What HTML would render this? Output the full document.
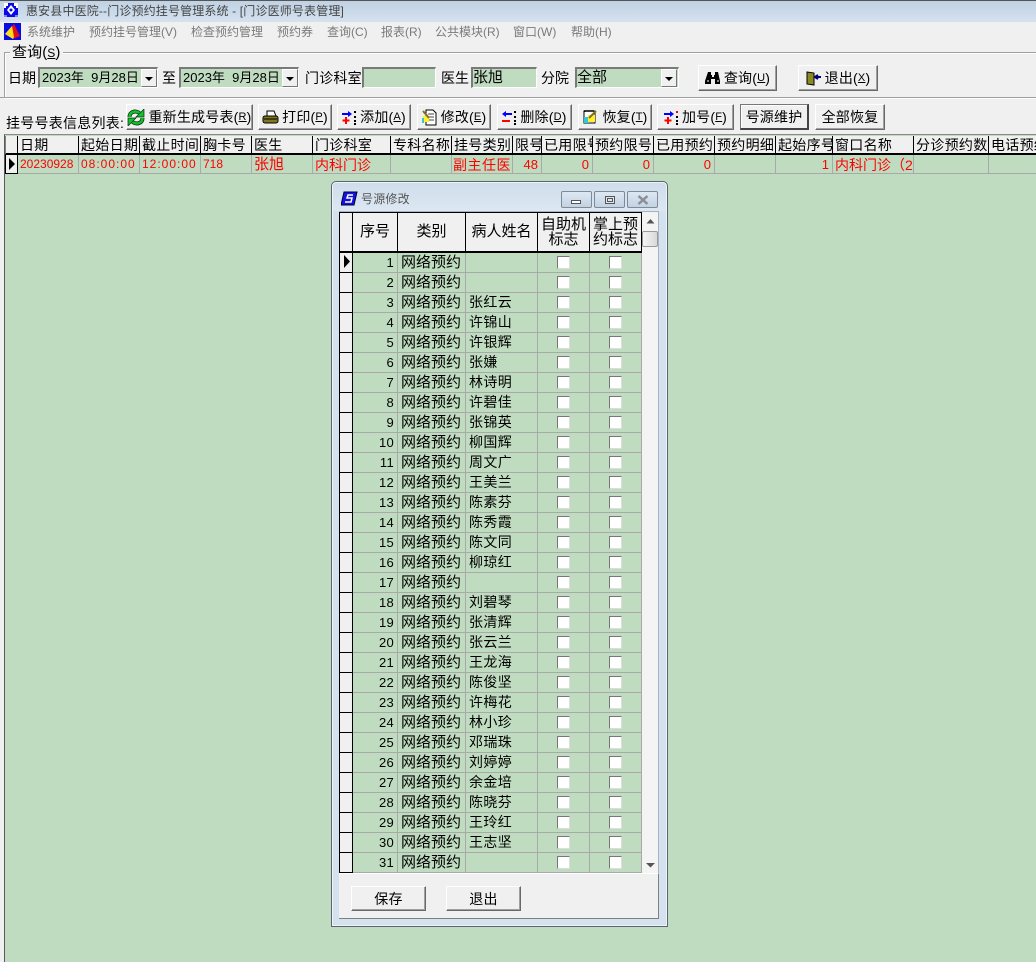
<!DOCTYPE html>
<html lang="zh"><head><meta charset="utf-8"><title>惠安县中医院</title>
<style>
html,body{margin:0;padding:0}
body{width:1036px;height:962px;overflow:hidden;position:relative;background:#f0f0f0;font:14px "Liberation Sans","WenQuanYi Zen Hei","Noto Sans CJK SC",sans-serif;color:#000}
.a,.b,.t,.i{position:absolute;box-sizing:border-box;white-space:nowrap}
.t{line-height:20px;height:20px}
.b{background:#f0f0f0;border-top:1px solid #fff;border-left:1px solid #fff;border-right:1px solid #696969;border-bottom:1px solid #696969;box-shadow:inset -1px -1px 0 #a0a0a0;display:flex;align-items:center;justify-content:center;height:26px;letter-spacing:.2px;font-size:14px}
.b svg{margin-right:3px;flex:none}
.b u{font-size:11px;text-decoration:underline}
.in{position:absolute;box-sizing:border-box;background:#c0dcc0;border-top:2px solid #7a7a7a;border-left:2px solid #7a7a7a;border-right:1px solid #fff;border-bottom:1px solid #fff;height:21px;line-height:17px;white-space:nowrap;overflow:hidden}
.dd{position:absolute;box-sizing:border-box;width:16px;height:18px;background:#f0f0f0;border:1px solid #777;border-top-color:#fff;border-left-color:#fff}
.dd:after{content:"";position:absolute;left:3px;top:7px;border-left:4px solid transparent;border-right:4px solid transparent;border-top:4px solid #000}
.h{position:absolute;top:136px;height:19px;line-height:18px;background:#f0f0f0;border-right:1px solid #000;border-bottom:2px solid #000;box-sizing:border-box;padding-left:2px;overflow:hidden;white-space:nowrap;letter-spacing:.3px}
.c{position:absolute;top:155px;height:19px;line-height:19px;background:#c0dcc0;border-right:1px solid #a9a9a9;border-bottom:1px solid #a9a9a9;box-sizing:border-box;padding:0 2px;overflow:hidden;white-space:nowrap;color:#f00;font-size:13px}
.z{font-size:14px;line-height:20px}
.r{text-align:right;padding-right:3px}
#g{position:absolute;left:339px;top:212px;border-collapse:collapse;table-layout:fixed;width:302px;background:#c0dcc0}
#g td{height:20px;padding:0;box-sizing:border-box;border-right:1px solid #a9a9a9;border-bottom:1px solid #a9a9a9;line-height:19px;overflow:hidden;white-space:nowrap}
#g tr>td:first-child{background:#f0f0f0;border-right:1px solid #000;border-bottom:1px solid #000;border-left:1px solid #000}
#g td:nth-child(2){text-align:right;padding-right:3px;font-size:13px;letter-spacing:.3px}
#g td:nth-child(3){padding-left:3px;font-size:15px}
#g td:nth-child(4){padding-left:3px;font-size:14px;letter-spacing:.4px}
#g td:nth-child(5),#g td:nth-child(6){text-align:center}
#g td i{display:inline-block;box-sizing:border-box;width:13px;height:13px;background:#fff;border:1px solid;border-color:#777 #ddd #ddd #777;vertical-align:-2px}
#g tr.hd td{height:39px;background:#f0f0f0;border-right:1px solid #000;border-bottom:2px solid #000;border-top:1px solid #000;text-align:center;padding:1px 0 0;line-height:15px;white-space:normal;font-size:15px;letter-spacing:0}
#g tr.hd td:first-child{border-left:1px solid #000}
</style></head><body>

<div class="a" style="left:0;top:0;width:1036px;height:22px;background:linear-gradient(#c0d2e4,#d4e1ee);border-top:1px solid #555"></div>
<svg class="a" style="left:4px;top:3px" width="14" height="14"><rect width="14" height="14" fill="#0a0ae6"/><path d="M0 0h4v3H2v2H0zM14 0h-4v3h2v2h2zM7 2l4 5-4 5-4-5z" fill="#fff"/><circle cx="7" cy="7" r="1.500" fill="#0a0ae6"/><path d="M0 13h3M11 13h3" stroke="#fff"/></svg>
<div class="t" style="left:26px;top:1px;color:#444;font-size:12px;letter-spacing:.15px">惠安县中医院--门诊预约挂号管理系统 - [门诊医师号表管理]</div>

<svg class="a" style="left:4px;top:23px" width="17" height="17"><rect width="17" height="17" fill="#0a0ae6"/><path d="M10 1l6 12-7 3-8-5z" fill="#e01010"/><path d="M1 11l7-8 2 11-1 2z" fill="#f5e020"/></svg>
<div class="t" style="left:27px;top:22px;color:#7a7a7a;font-size:12px">系统维护</div>
<div class="t" style="left:89px;top:22px;color:#7a7a7a;font-size:12px">预约挂号管理(V)</div>
<div class="t" style="left:191px;top:22px;color:#7a7a7a;font-size:12px">检查预约管理</div>
<div class="t" style="left:277px;top:22px;color:#7a7a7a;font-size:12px">预约券</div>
<div class="t" style="left:327px;top:22px;color:#7a7a7a;font-size:12px">查询(C)</div>
<div class="t" style="left:381px;top:22px;color:#7a7a7a;font-size:12px">报表(R)</div>
<div class="t" style="left:435px;top:22px;color:#7a7a7a;font-size:12px">公共模块(R)</div>
<div class="t" style="left:513px;top:22px;color:#7a7a7a;font-size:12px">窗口(W)</div>
<div class="t" style="left:571px;top:22px;color:#7a7a7a;font-size:12px">帮助(H)</div>

<!-- group -->
<div class="a" style="left:4px;top:52px;width:1040px;height:46px;border:1px solid #a0a0a0;box-shadow:inset 1px 1px 0 #fff,0 1px 0 #fff"></div>
<div class="t" style="left:10px;top:43px;background:#f0f0f0;padding:0 2px;font-size:15px;letter-spacing:.1px">查询(<u style="font-size:12px">S</u>)</div>

<div class="t" style="left:8px;top:68px;font-size:14px">日期</div>
<div class="in" style="left:38px;top:67px;width:120px;padding-left:2px;font-size:13px">2023年&nbsp; 9月28日<span class="dd" style="left:101px;top:0"></span></div>
<div class="t" style="left:162px;top:68px">至</div>
<div class="in" style="left:179px;top:67px;width:120px;padding-left:2px;font-size:13px">2023年&nbsp; 9月28日<span class="dd" style="left:101px;top:0"></span></div>
<div class="t" style="left:305px;top:68px;letter-spacing:.2px">门诊科室</div>
<div class="in" style="left:362px;top:67px;width:74px"></div>
<div class="t" style="left:441px;top:68px">医生</div>
<div class="in" style="left:471px;top:67px;width:66px;padding-left:0;font-size:15px;line-height:17px">张旭</div>
<div class="t" style="left:541px;top:68px">分院</div>
<div class="in" style="left:575px;top:67px;width:104px;padding-left:0;font-size:15px;line-height:17px">全部<span class="dd" style="left:84px;top:0"></span></div>

<div class="b" style="left:698px;top:65px;width:79px"><svg width="16" height="14" viewBox="0 0 16 14"><path d="M3 1h3v3h1v2h2V4h1V1h3l2 9v3H10V8H6v5H0v-3z" fill="#000"/><path d="M2 10h2M12 10h2" stroke="#fff"/></svg>查询(<u>U</u>)</div>
<div class="b" style="left:798px;top:65px;width:80px"><svg width="16" height="15" viewBox="0 0 16 15"><path d="M1 1l7 1v12l-7-1z" fill="#8a8a20" stroke="#000"/><path d="M10 6h5M12 4l-3 2 3 2" stroke="#00007a" stroke-width="2" fill="none"/></svg>退出(<u>X</u>)</div>

<div class="a" style="left:0;top:97px;width:1036px;height:1px;background:#a0a0a0"></div>

<div class="t" style="left:6px;top:113px;letter-spacing:.25px">挂号号表信息列表:</div>
<div class="b" style="left:126px;top:104px;width:127px"><svg width="18" height="17" viewBox="0 0 18 17"><path d="M2.500 8C2.500 3 8 1 12.500 4" fill="none" stroke="#04300a" stroke-width="4"/><path d="M15.500 9C15.500 14 10 16 5.500 13" fill="none" stroke="#04300a" stroke-width="4"/><path d="M2.500 8C2.500 3 8 1 12.500 4" fill="none" stroke="#12c030" stroke-width="2.500"/><path d="M15.500 9C15.500 14 10 16 5.500 13" fill="none" stroke="#12c030" stroke-width="2.500"/><path d="M17 0v8H9z" fill="#12c030" stroke="#04300a" stroke-width=".7"/><path d="M1 17V9h8z" fill="#12c030" stroke="#04300a" stroke-width=".7"/></svg>重新生成号表(<u>R</u>)</div>
<div class="b" style="left:258px;top:104px;width:74px"><svg width="17" height="15" viewBox="0 0 17 15"><path d="M5 1h7l2 5H5z" fill="#fff" stroke="#000"/><rect x="1" y="6" width="15" height="7" rx="2" fill="#807820" stroke="#000"/><path d="M2 9h13" stroke="#000"/></svg>打印(<u>P</u>)</div>
<div class="b" style="left:337px;top:104px;width:74px"><svg width="15" height="15" viewBox="0 0 15 15"><path d="M0 4h8" stroke="#00f" stroke-width="2"/><path d="M6 1l4 3-4 3z" fill="#00f"/><path d="M4 7v7M0.500 10.500h7" stroke="#f00" stroke-width="2"/><path d="M13 1v2M13 6v2M13 10v2M13 13v2" stroke="#000" stroke-width="2"/></svg>添加(<u>A</u>)</div>
<div class="b" style="left:417px;top:104px;width:74px"><svg width="16" height="17" viewBox="0 0 16 17"><path d="M4 1h7l3 3v12H4z" fill="#fff" stroke="#000"/><path d="M6 5h6M7 8h5M7 11h5" stroke="#444"/><rect x="1" y="7" width="6" height="6" fill="#ffef30"/><path d="M1 2l6 7" stroke="#807020" stroke-width="2"/><path d="M0 9h2v5H0z" fill="#30c8d8"/></svg>修改(<u>E</u>)</div>
<div class="b" style="left:497px;top:104px;width:75px"><svg width="15" height="15" viewBox="0 0 15 15"><path d="M2 4h8" stroke="#00f" stroke-width="2"/><path d="M4 1L0 4l4 3z" fill="#00f"/><path d="M0 11h8" stroke="#f00" stroke-width="2"/><path d="M13 1v2M13 6v2M13 10v2M13 13v2" stroke="#000" stroke-width="2"/></svg>删除(<u>D</u>)</div>
<div class="b" style="left:578px;top:104px;width:74px"><svg width="17" height="16" viewBox="0 0 17 16"><path d="M2 2h11v12H2z" fill="#fff" stroke="#000"/><path d="M3 1v2M5 1v2M7 1v2M9 1v2M11 1v2" stroke="#000"/><rect x="2" y="8" width="5" height="6" fill="#30c8d8"/><rect x="6" y="6" width="7" height="7" fill="#ffef30"/><path d="M7 9l7-7" stroke="#807020" stroke-width="2"/></svg>恢复(<u>T</u>)</div>
<div class="b" style="left:657px;top:104px;width:77px"><svg width="15" height="15" viewBox="0 0 15 15"><path d="M0 4h8" stroke="#00f" stroke-width="2"/><path d="M6 1l4 3-4 3z" fill="#00f"/><path d="M4 7v7M0.500 10.500h7" stroke="#f00" stroke-width="2"/><path d="M13 1v2" stroke="#f00" stroke-width="2"/><path d="M13 6v2M13 10v2M13 13v2" stroke="#000" stroke-width="2"/></svg>加号(<u>F</u>)</div>
<div class="b" style="left:740px;top:104px;width:69px;border:1px solid #777;border-right:2px solid #444;border-bottom:2px solid #444;box-shadow:inset 1px 1px 0 #fff">号源维护</div>
<div class="b" style="left:815px;top:104px;width:70px">全部恢复</div>

<!-- main grid -->
<div class="a" style="left:4px;top:134px;width:1032px;height:828px;background:#c0dcc0;border-left:1px solid #5a5a5a;border-top:1px solid #8a8a8a"></div>
<div class="a" style="left:0;top:135px;width:5px;height:827px;background:#f0f0f0;border-right:1px solid #5a5a5a"></div>

<div class="h" style="left:5px;width:13px;border-left:1px solid #808080"></div>
<div class="h" style="left:18px;width:61px">日期</div>
<div class="h" style="left:79px;width:61px">起始日期</div>
<div class="h" style="left:140px;width:61px">截止时间</div>
<div class="h" style="left:201px;width:51px">胸卡号</div>
<div class="h" style="left:252px;width:61px">医生</div>
<div class="h" style="left:313px;width:78px">门诊科室</div>
<div class="h" style="left:391px;width:61px">专科名称</div>
<div class="h" style="left:452px;width:61px">挂号类别</div>
<div class="h" style="left:513px;width:29px">限号</div>
<div class="h" style="left:542px;width:51px">已用限号</div>
<div class="h" style="left:593px;width:61px">预约限号</div>
<div class="h" style="left:654px;width:61px">已用预约</div>
<div class="h" style="left:715px;width:61px">预约明细</div>
<div class="h" style="left:776px;width:57px">起始序号</div>
<div class="h" style="left:833px;width:81px">窗口名称</div>
<div class="h" style="left:914px;width:75px">分诊预约数</div>
<div class="h" style="left:989px;width:47px;border-right:0">电话预约</div>

<div class="c" style="left:5px;width:13px;background:#f0f0f0;border-right:1px solid #000;border-bottom:1px solid #000;border-left:1px solid #000"></div>
<svg class="a" style="left:8px;top:158px" width="8" height="12"><path d="M1 0l6 6-6 6z" fill="#000"/></svg>
<div class="c" style="left:18px;width:61px;font-size:12px">20230928</div>
<div class="c" style="left:79px;width:61px;font-size:12px;letter-spacing:1px">08:00:00</div>
<div class="c" style="left:140px;width:61px;font-size:12px;letter-spacing:1px">12:00:00</div>
<div class="c" style="left:201px;width:51px;font-size:12px">718</div>
<div class="c z" style="left:252px;width:61px;font-size:15px">张旭</div>
<div class="c z" style="left:313px;width:78px">内科门诊</div>
<div class="c" style="left:391px;width:61px"></div>
<div class="c z" style="left:452px;width:61px;padding-left:1px;letter-spacing:.5px">副主任医师</div>
<div class="c r" style="left:513px;width:29px">48</div>
<div class="c r" style="left:542px;width:51px">0</div>
<div class="c r" style="left:593px;width:61px">0</div>
<div class="c r" style="left:654px;width:61px">0</div>
<div class="c" style="left:715px;width:61px"></div>
<div class="c r" style="left:776px;width:57px">1</div>
<div class="c z" style="left:833px;width:81px">内科门诊（2</div>
<div class="c" style="left:914px;width:75px"></div>
<div class="c" style="left:989px;width:47px;border-right:0"></div>

<!-- dialog -->
<div class="a" style="left:331px;top:181px;width:337px;height:746px;border:1px solid #5b6470;border-radius:5px 5px 0 0;background:#d4e2f0;box-shadow:inset 0 0 0 1px #eef3f8"></div>
<div class="a" style="left:333px;top:183px;width:333px;height:28px;background:linear-gradient(#cfddeb,#dce7f2);border-radius:4px 4px 0 0"></div>
<svg class="a" style="left:341px;top:191px" width="17" height="15" viewBox="0 0 17 15"><path d="M3 1h13l-3 13H0z" fill="#1414e0" stroke="#000030"/><path d="M12 4H7L6 7h5l-1 4H4" stroke="#fff" stroke-width="1.500" fill="none"/></svg>
<div class="t" style="left:361px;top:189px;color:#555;font-size:12px;letter-spacing:.2px">号源修改</div>
<div class="a" style="left:561px;top:191px;width:31px;height:17px;border:1px solid #7d8a98;border-radius:2px;background:linear-gradient(#dde8f3,#c3d2e2)"><div class="a" style="left:9px;top:8px;width:10px;height:4px;border:1px solid #555;background:#fff"></div></div>
<div class="a" style="left:594px;top:191px;width:31px;height:17px;border:1px solid #7d8a98;border-radius:2px;background:linear-gradient(#dde8f3,#c3d2e2)"><div class="a" style="left:10px;top:4px;width:10px;height:8px;border:1px solid #555;background:#dde8f3;box-shadow:inset 0 0 0 1px #dde8f3,inset 0 0 0 2px #555"></div></div>
<div class="a" style="left:627px;top:191px;width:31px;height:17px;border:1px solid #7d8a98;border-radius:2px;background:linear-gradient(#dde8f3,#c3d2e2)"><svg class="a" style="left:9px;top:3px" width="12" height="10"><path d="M1.500 1l9 8M10.500 1l-9 8" stroke="#8a8f96" stroke-width="2.500"/></svg></div>

<div class="a" style="left:339px;top:211px;width:320px;height:707px;background:#f0f0f0;border:1px solid #a8b4c0"></div>

<table id="g"><colgroup><col style="width:13px"><col style="width:45px"><col style="width:68px"><col style="width:72px"><col style="width:52px"><col style="width:52px"></colgroup>
<tr class="hd"><td></td><td style="text-align:center;padding:0;font-size:15px;letter-spacing:0">序号</td><td style="text-align:center;padding:0">类别</td><td style="text-align:center;padding:0;font-size:15px;letter-spacing:0">病人姓名</td><td>自助机标志</td><td>掌上预约标志</td></tr>
<tr><td></td><td>1</td><td>网络预约</td><td></td><td><i></i></td><td><i></i></td></tr>
<tr><td></td><td>2</td><td>网络预约</td><td></td><td><i></i></td><td><i></i></td></tr>
<tr><td></td><td>3</td><td>网络预约</td><td>张红云</td><td><i></i></td><td><i></i></td></tr>
<tr><td></td><td>4</td><td>网络预约</td><td>许锦山</td><td><i></i></td><td><i></i></td></tr>
<tr><td></td><td>5</td><td>网络预约</td><td>许银辉</td><td><i></i></td><td><i></i></td></tr>
<tr><td></td><td>6</td><td>网络预约</td><td>张嫌</td><td><i></i></td><td><i></i></td></tr>
<tr><td></td><td>7</td><td>网络预约</td><td>林诗明</td><td><i></i></td><td><i></i></td></tr>
<tr><td></td><td>8</td><td>网络预约</td><td>许碧佳</td><td><i></i></td><td><i></i></td></tr>
<tr><td></td><td>9</td><td>网络预约</td><td>张锦英</td><td><i></i></td><td><i></i></td></tr>
<tr><td></td><td>10</td><td>网络预约</td><td>柳国辉</td><td><i></i></td><td><i></i></td></tr>
<tr><td></td><td>11</td><td>网络预约</td><td>周文广</td><td><i></i></td><td><i></i></td></tr>
<tr><td></td><td>12</td><td>网络预约</td><td>王美兰</td><td><i></i></td><td><i></i></td></tr>
<tr><td></td><td>13</td><td>网络预约</td><td>陈素芬</td><td><i></i></td><td><i></i></td></tr>
<tr><td></td><td>14</td><td>网络预约</td><td>陈秀霞</td><td><i></i></td><td><i></i></td></tr>
<tr><td></td><td>15</td><td>网络预约</td><td>陈文同</td><td><i></i></td><td><i></i></td></tr>
<tr><td></td><td>16</td><td>网络预约</td><td>柳琼红</td><td><i></i></td><td><i></i></td></tr>
<tr><td></td><td>17</td><td>网络预约</td><td></td><td><i></i></td><td><i></i></td></tr>
<tr><td></td><td>18</td><td>网络预约</td><td>刘碧琴</td><td><i></i></td><td><i></i></td></tr>
<tr><td></td><td>19</td><td>网络预约</td><td>张清辉</td><td><i></i></td><td><i></i></td></tr>
<tr><td></td><td>20</td><td>网络预约</td><td>张云兰</td><td><i></i></td><td><i></i></td></tr>
<tr><td></td><td>21</td><td>网络预约</td><td>王龙海</td><td><i></i></td><td><i></i></td></tr>
<tr><td></td><td>22</td><td>网络预约</td><td>陈俊坚</td><td><i></i></td><td><i></i></td></tr>
<tr><td></td><td>23</td><td>网络预约</td><td>许梅花</td><td><i></i></td><td><i></i></td></tr>
<tr><td></td><td>24</td><td>网络预约</td><td>林小珍</td><td><i></i></td><td><i></i></td></tr>
<tr><td></td><td>25</td><td>网络预约</td><td>邓瑞珠</td><td><i></i></td><td><i></i></td></tr>
<tr><td></td><td>26</td><td>网络预约</td><td>刘婷婷</td><td><i></i></td><td><i></i></td></tr>
<tr><td></td><td>27</td><td>网络预约</td><td>余金培</td><td><i></i></td><td><i></i></td></tr>
<tr><td></td><td>28</td><td>网络预约</td><td>陈晓芬</td><td><i></i></td><td><i></i></td></tr>
<tr><td></td><td>29</td><td>网络预约</td><td>王玲红</td><td><i></i></td><td><i></i></td></tr>
<tr><td></td><td>30</td><td>网络预约</td><td>王志坚</td><td><i></i></td><td><i></i></td></tr>
<tr><td></td><td>31</td><td>网络预约</td><td></td><td><i></i></td><td><i></i></td></tr>
</table>
<svg class="a" style="left:343px;top:255px" width="8" height="13"><path d="M1 0l6 6.500-6 6.500z" fill="#000"/></svg>

<!-- scrollbar -->
<div class="a" style="left:642px;top:213px;width:16px;height:660px;background:#f4f4f4"></div>
<svg class="a" style="left:646px;top:219px" width="9" height="5"><path d="M4.500 0l4 4.500h-8z" fill="#555"/></svg>
<div class="a" style="left:642px;top:231px;width:16px;height:16px;background:linear-gradient(90deg,#f6f6f6,#d8d8d8);border:1px solid #9a9a9a;border-radius:2px"></div>
<svg class="a" style="left:646px;top:863px" width="9" height="5"><path d="M0 0h9l-4.500 4.500z" fill="#555"/></svg>

<!-- footer -->
<div class="a" style="left:339px;top:873px;width:320px;height:46px;background:#f0f0f0;border-top:1px solid #fff;border-right:1px solid #808080;border-bottom:1px solid #808080"></div>
<div class="b" style="left:351px;top:886px;width:75px;height:25px;font-size:14px">保存</div>
<div class="b" style="left:446px;top:886px;width:75px;height:25px;font-size:14px">退出</div>
</body></html>
